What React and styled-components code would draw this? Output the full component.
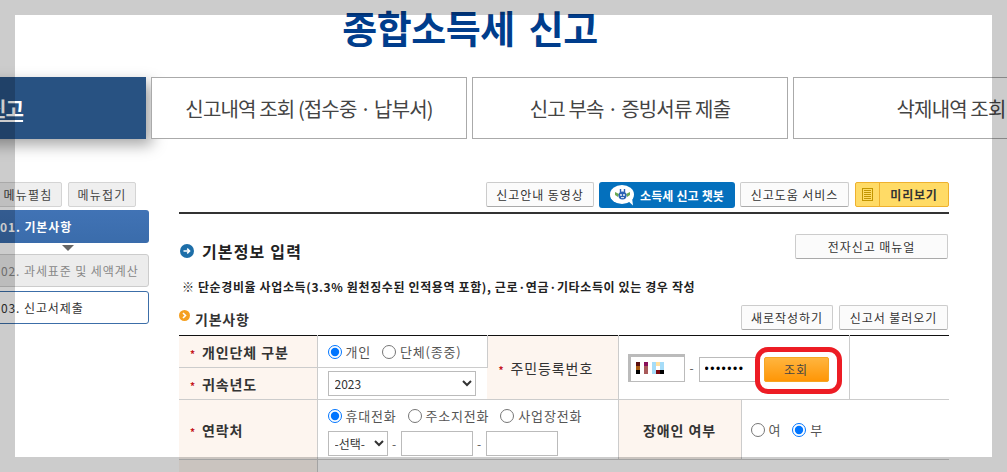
import React from "react";
import styled, { createGlobalStyle } from "styled-components";

const GlobalStyle = createGlobalStyle`
  html, body {
    margin: 0;
    padding: 0;
    height: 100%;
    overflow: hidden;
    background: #fff;
  }
  body {
    font-family: "Noto Sans CJK KR", "Noto Sans", sans-serif;
    font-size: 12px;
    color: #333;
  }
  * {
    box-sizing: border-box;
  }
`;

const Page = styled.div`
  width: 1280px;
  height: 472px;
  margin-left: -170px;
  overflow: hidden;
`;

const Title = styled.h1`
  margin: 0;
  height: 77px;
  padding-top: 3px;
  text-align: center;
  font-size: 38px;
  line-height: 48px;
  font-weight: 700;
  letter-spacing: -0.5px;
  word-spacing: 6px;
  color: #003d8c;
`;

const Tabs = styled.div`
  display: flex;
  gap: 5px;
`;

const Tab = styled.div`
  flex: 0 0 316px;
  height: 62px;
  display: flex;
  align-items: center;
  justify-content: center;
  font-size: 20px;
  letter-spacing: -0.85px;
  font-weight: ${(props) => (props.active ? 700 : 400)};
  text-decoration: ${(props) => (props.active ? "underline" : "none")};
  text-underline-offset: 3px;
  color: ${(props) => (props.active ? "#fff" : "#444")};
  background: ${(props) => (props.active ? "#285282" : "#fff")};
  border: 1px solid ${(props) => (props.active ? "#285282" : "#aaa")};
  box-shadow: ${(props) =>
    props.active ? "6px 6px 14px rgba(0, 0, 0, 0.35)" : "none"};
`;

const Body = styled.div`
  display: flex;
  gap: 30px;
  margin-left: 150px;
  padding-top: 43px;
`;

const Sidebar = styled.div`
  flex: 0 0 169px;
`;

const MenuButtons = styled.div`
  display: flex;
  gap: 6px;
  padding-left: 14px;
  margin-bottom: 3px;
`;

const MenuButton = styled.div`
  width: 68px;
  height: 25px;
  display: flex;
  align-items: center;
  justify-content: center;
  background: #efefef;
  border: 1px solid #d4d4d4;
  border-radius: 2px;
  color: #444;
  letter-spacing: 1.2px;
`;

const Step = styled.div`
  height: 33px;
  display: flex;
  align-items: center;
  padding-left: 20px;
  border-radius: 3px;
  font-weight: ${(props) => (props.variant === "active" ? 700 : 400)};
  letter-spacing: 0.9px;
  ${(props) =>
    props.variant === "active" &&
    "background: linear-gradient(#4173b5, #3a6cab); color: #fff;"}
  ${(props) =>
    props.variant === "off" &&
    "background: #ececec; border: 1px solid #ccc; color: #888;"}
  ${(props) =>
    props.variant === "open" &&
    "background: #fff; border: 1px solid #3c6ea8; color: #333; margin-top: 4px;"}
`;

const StepArrow = styled.div`
  width: 0;
  height: 0;
  margin: 2px 0 3px 82px;
  border-left: 6px solid transparent;
  border-right: 6px solid transparent;
  border-top: 6px solid #666;
`;

const Main = styled.div`
  flex: 0 0 770px;
`;

const TopBar = styled.div`
  display: flex;
  justify-content: flex-end;
  gap: 5px;
  height: 32px;
  padding-bottom: 4px;
  border-bottom: 2px solid #333;
`;

const Button = styled.div`
  width: ${(props) => props.width}px;
  height: 25px;
  flex: none;
  display: flex;
  align-items: center;
  justify-content: center;
  background: #fbfbfb;
  border: 1px solid #ccc;
  border-bottom-color: #aaa;
  border-radius: 2px;
  color: #333;
  letter-spacing: 0.95px;
`;

const ChatButton = styled(Button)`
  height: 26px;
  gap: 5px;
  background: #0470bd;
  border: 0;
  border-radius: 3px;
  color: #fff;
  font-weight: 700;
  letter-spacing: 0.15px;
`;

const PreviewButton = styled.div`
  width: 94px;
  height: 25px;
  margin-left: 1px;
  display: flex;
  background: #ffdb66;
  border: 1px solid #eeb12e;
  border-radius: 2px;
  font-weight: 700;
  color: #333;
`;

const PreviewIcon = styled.div`
  width: 24px;
  display: flex;
  align-items: center;
  justify-content: center;
  border-right: 1px solid #eeb12e;
`;

const PreviewLabel = styled.div`
  flex: 1;
  display: flex;
  align-items: center;
  justify-content: center;
  letter-spacing: 0.8px;
`;

const SectionHead = styled.div`
  display: flex;
  align-items: center;
  justify-content: space-between;
  height: 25px;
  margin-top: 20px;
  padding-right: 1px;
`;

const HeadTitle = styled.div`
  display: flex;
  align-items: center;
  gap: 8px;
  margin-top: 9px;
  padding-left: 1px;
  font-size: 16px;
  font-weight: 700;
  letter-spacing: 1.15px;
  color: #222;
`;

const Notice = styled.div`
  margin-top: 19px;
  padding-left: 3px;
  height: 18px;
  line-height: 18px;
  font-weight: 700;
  color: #222;
  letter-spacing: 0.62px;
`;

const SubHead = styled.div`
  display: flex;
  align-items: center;
  justify-content: space-between;
  height: 25px;
  margin-top: 9px;
  padding-right: 1px;
`;

const SubTitle = styled.div`
  display: flex;
  align-items: center;
  gap: 5px;
  padding-top: 2px;
  font-size: 14px;
  font-weight: 700;
  color: #333;
  letter-spacing: 0.75px;
`;

const BulletSlot = styled.span`
  display: flex;
  margin-top: -7px;
`;

const SubButtons = styled.div`
  display: flex;
  gap: 6px;
`;

const Table = styled.table`
  width: 770px;
  margin-top: 5px;
  table-layout: fixed;
  border-collapse: collapse;
  border-top: 1px solid #111;
`;

const Row = styled.tr`
  height: ${(props) => props.height}px;
`;

const Label = styled.th`
  padding: 0 0 0 ${(props) => (props.center ? 0 : 11)}px;
  text-align: ${(props) => (props.center ? "center" : "left")};
  background: #fdf5ef;
  border: 1px solid #ccc;
  border-top: 0;
  border-left: 0;
  font-size: 14px;
  font-weight: ${(props) => (props.center ? 700 : 400)};
  letter-spacing: 0.9px;
  color: #333;
`;

const BoldLabel = styled.span`
  font-weight: 700;
`;

const Star = styled.span`
  margin-right: 6px;
  font-size: 10px;
  color: #c4161c;
  font-weight: 700;
`;

const Cell = styled.td`
  padding: 0 0 0 10px;
  border: 1px solid #ccc;
  border-top: 0;
  border-left: 0;
  &:last-child {
    border-right: 0;
  }
`;

const Options = styled.div`
  display: flex;
  align-items: center;
  gap: 11px;
  font-size: 13px;
  color: #555;
`;

const ShiftedOptions = styled(Options)`
  margin-left: -1px;
`;

const Option = styled.label`
  display: flex;
  align-items: center;
  gap: 4px;
  letter-spacing: 0.8px;
`;

const Radio = styled.input.attrs({ type: "radio" })`
  width: 14px;
  height: 14px;
  margin: 0;
`;

const Select = styled.select`
  width: ${(props) => props.width}px;
  height: 25px;
  padding: 0 0 0 2px;
  background: #fff;
  border: 1px solid #bbb;
  border-radius: 0;
  font-family: inherit;
  font-size: 12px;
  color: #333;
`;

const ContactField = styled.div`
  padding-top: 3px;
`;

const FieldRow = styled.div`
  display: flex;
  align-items: center;
  margin-top: 6px;
`;

const Dash = styled.span`
  width: ${(props) => props.width || 13}px;
  text-align: center;
  color: #555;
`;

const TextInput = styled.input`
  width: 72px;
  height: 25px;
  padding: 0 4px;
  background: #fff;
  border: 1px solid #bbb;
  border-radius: 0;
`;

const IdRow = styled.div`
  position: relative;
  display: flex;
  align-items: center;
  height: 28px;
  margin-left: -1px;
`;

const MaskedBox = styled.div`
  width: 57px;
  height: 28px;
  padding: 5px 0 0 5px;
  background: #fff;
  border: 1px solid #bbb;
  border-top-width: 3px;
  border-left-width: 3px;
  display: flex;
`;

const PasswordInput = styled.input`
  width: 58px;
  height: 25px;
  align-self: flex-end;
  padding: 0 5px;
  background: #fff;
  border: 1px solid #bbb;
  border-radius: 0;
  font-size: 12px;
  letter-spacing: 1.5px;
`;

const LookupButton = styled.div`
  width: 65px;
  height: 25px;
  align-self: flex-end;
  margin-left: 7px;
  display: flex;
  align-items: center;
  justify-content: center;
  background: linear-gradient(#ffb53f, #ff9606);
  border: 1px solid #f5a623;
  border-radius: 2px;
  color: #444;
  letter-spacing: 0.9px;
`;

const RedRing = styled.div`
  position: absolute;
  left: 127px;
  top: -7px;
  width: 87px;
  height: 47px;
  border: 5px solid #ed1c24;
  border-radius: 13px;
`;

const AddressLine = styled.div`
  height: 40px;
  padding: 10px 0 0 37px;
  line-height: 18px;
  font-size: 13px;
  color: #555;
`;

const TopCell = styled(Cell)`
  vertical-align: top;
`;

const Overlay = styled.div`
  position: fixed;
  inset: 0;
  border: 15px solid rgba(0, 0, 0, 0.2);
  pointer-events: none;
`;

const CircleBullet = () => (
  <svg width="14" height="14" viewBox="0 0 14 14">
    <circle cx="7" cy="7" r="7" fill="#1d6ea8" />
    <path d="M3.5 7h6M7.2 4.6 9.6 7 7.2 9.4" fill="none" stroke="#fff" strokeWidth="1.5" />
  </svg>
);

const OrangeBullet = () => (
  <svg width="11" height="11" viewBox="0 0 11 11">
    <circle cx="5.5" cy="5.5" r="5.5" fill="#f5a021" />
    <path d="M4 3l2.5 2.5L4 8" fill="none" stroke="#fff" strokeWidth="1.6" />
  </svg>
);

const BotIcon = () => (
  <svg width="25" height="21" viewBox="0 0 25 21">
    <ellipse cx="12" cy="9.5" rx="12" ry="9.5" fill="#fff" />
    <path d="M17 15l6 5.5-1-8z" fill="#fff" />
    <path d="M5 7l4 2-1 3-3-2zM20 7l-4 2 1 3 3-2z" fill="#6aa852" />
    <circle cx="12.5" cy="10.5" r="4" fill="#2a62b4" />
    <path d="M10.5 4v3M14.5 4v3" stroke="#2a62b4" strokeWidth="1.4" />
    <circle cx="11" cy="10" r="0.9" fill="#fff" />
    <circle cx="14" cy="10" r="0.9" fill="#fff" />
    <path d="M11 12.6h3" stroke="#fff" strokeWidth="0.9" />
  </svg>
);

const DocIcon = () => (
  <svg width="11" height="13" viewBox="0 0 11 13" shapeRendering="crispEdges">
    <rect x="0.5" y="0.5" width="10" height="12" fill="none" stroke="#c39600" />
    <path d="M2 2.5h7M2 4.5h7M2 6.5h7M2 8.5h7M2 10.5h7" stroke="#c39600" strokeWidth="1" />
  </svg>
);

const MaskedId = () => (
  <svg width="28" height="12" viewBox="0 0 28 12" shapeRendering="crispEdges">
    <rect x="0" y="0" width="4" height="4" fill="#5a0f0f" />
    <rect x="0" y="4" width="4" height="4" fill="#a85a10" />
    <rect x="0" y="8" width="4" height="4" fill="#000" />
    <rect x="8" y="0" width="4" height="4" fill="#8a0f5a" />
    <rect x="8" y="4" width="4" height="8" fill="#a85a5a" />
    <rect x="16" y="0" width="12" height="8" fill="#a5dcf8" />
    <rect x="16" y="8" width="4" height="4" fill="#a5dcf8" />
    <rect x="20" y="0" width="4" height="4" fill="#ffe0a0" />
    <rect x="20" y="4" width="4" height="4" fill="#fff" />
    <rect x="20" y="8" width="4" height="4" fill="#7a0a10" />
    <rect x="24" y="8" width="4" height="4" fill="#000" />
  </svg>
);

const App = () => {
  return (
    <>
      <GlobalStyle />
      <Page>
        <Title>종합소득세 신고</Title>
        <Tabs>
          <Tab active>정기신고</Tab>
          <Tab>신고내역 조회 (접수중 · 납부서)</Tab>
          <Tab>신고 부속 · 증빙서류 제출</Tab>
          <Tab>삭제내역 조회</Tab>
        </Tabs>
        <Body>
          <Sidebar>
            <MenuButtons>
              <MenuButton>메뉴펼침</MenuButton>
              <MenuButton>메뉴접기</MenuButton>
            </MenuButtons>
            <Step variant="active">01. 기본사항</Step>
            <StepArrow />
            <Step variant="off">02. 과세표준 및 세액계산</Step>
            <Step variant="open">03. 신고서제출</Step>
          </Sidebar>
          <Main>
            <TopBar>
              <Button width={108}>신고안내 동영상</Button>
              <ChatButton width={136}>
                <BotIcon />
                소득세 신고 챗봇
              </ChatButton>
              <Button width={109}>신고도움 서비스</Button>
              <PreviewButton>
                <PreviewIcon>
                  <DocIcon />
                </PreviewIcon>
                <PreviewLabel>미리보기</PreviewLabel>
              </PreviewButton>
            </TopBar>
            <SectionHead>
              <HeadTitle>
                <CircleBullet />
                기본정보 입력
              </HeadTitle>
              <Button width={153}>전자신고 매뉴얼</Button>
            </SectionHead>
            <Notice>
              ※ 단순경비율 사업소득(3.3% 원천징수된 인적용역 포함), 근로·연금·기타소득이 있는 경우 작성
            </Notice>
            <SubHead>
              <SubTitle>
                <BulletSlot>
                  <OrangeBullet />
                </BulletSlot>
                기본사항
              </SubTitle>
              <SubButtons>
                <Button width={92}>새로작성하기</Button>
                <Button width={109}>신고서 불러오기</Button>
              </SubButtons>
            </SubHead>
            <Table>
              <colgroup>
                <col width="138" />
                <col width="170" />
                <col width="131" />
                <col width="123" />
                <col width="108" />
                <col width="100" />
              </colgroup>
              <tbody>
                <Row height={32}>
                  <Label>
                    <Star>*</Star>
                    <BoldLabel>개인단체 구분</BoldLabel>
                  </Label>
                  <Cell>
                    <Options>
                      <Option>
                        <Radio name="kind" defaultChecked />
                        개인
                      </Option>
                      <Option>
                        <Radio name="kind" />
                        단체(종중)
                      </Option>
                    </Options>
                  </Cell>
                  <Label rowSpan={2}>
                    <Star>*</Star>
                    주민등록번호
                  </Label>
                  <Cell rowSpan={2} colSpan={2}>
                    <IdRow>
                      <MaskedBox>
                        <MaskedId />
                      </MaskedBox>
                      <Dash width={14}>-</Dash>
                      <PasswordInput type="password" defaultValue="1234567" />
                      <LookupButton>조회</LookupButton>
                      <RedRing />
                    </IdRow>
                  </Cell>
                  <Cell rowSpan={2} />
                </Row>
                <Row height={32}>
                  <Label>
                    <Star>*</Star>
                    <BoldLabel>귀속년도</BoldLabel>
                  </Label>
                  <Cell>
                    <Select width={148} defaultValue="2023">
                      <option>2023</option>
                    </Select>
                  </Cell>
                </Row>
                <Row height={60}>
                  <Label>
                    <Star>*</Star>
                    <BoldLabel>연락처</BoldLabel>
                  </Label>
                  <Cell colSpan={2}>
                    <ContactField>
                      <Options>
                        <Option>
                          <Radio name="phone" defaultChecked />
                          휴대전화
                        </Option>
                        <Option>
                          <Radio name="phone" />
                          주소지전화
                        </Option>
                        <Option>
                          <Radio name="phone" />
                          사업장전화
                        </Option>
                      </Options>
                      <FieldRow>
                        <Select width={60}>
                          <option>-선택-</option>
                        </Select>
                        <Dash>-</Dash>
                        <TextInput />
                        <Dash>-</Dash>
                        <TextInput />
                      </FieldRow>
                    </ContactField>
                  </Cell>
                  <Label center>장애인 여부</Label>
                  <Cell colSpan={2}>
                    <ShiftedOptions>
                      <Option>
                        <Radio name="disabled" />
                        여
                      </Option>
                      <Option>
                        <Radio name="disabled" defaultChecked />
                        부
                      </Option>
                    </ShiftedOptions>
                  </Cell>
                </Row>
                <Row height={40}>
                  <Label />
                  <TopCell colSpan={5}>
                    <AddressLine>시도</AddressLine>
                  </TopCell>
                </Row>
              </tbody>
            </Table>
          </Main>
        </Body>
      </Page>
      <Overlay />
    </>
  );
};

export default App;
